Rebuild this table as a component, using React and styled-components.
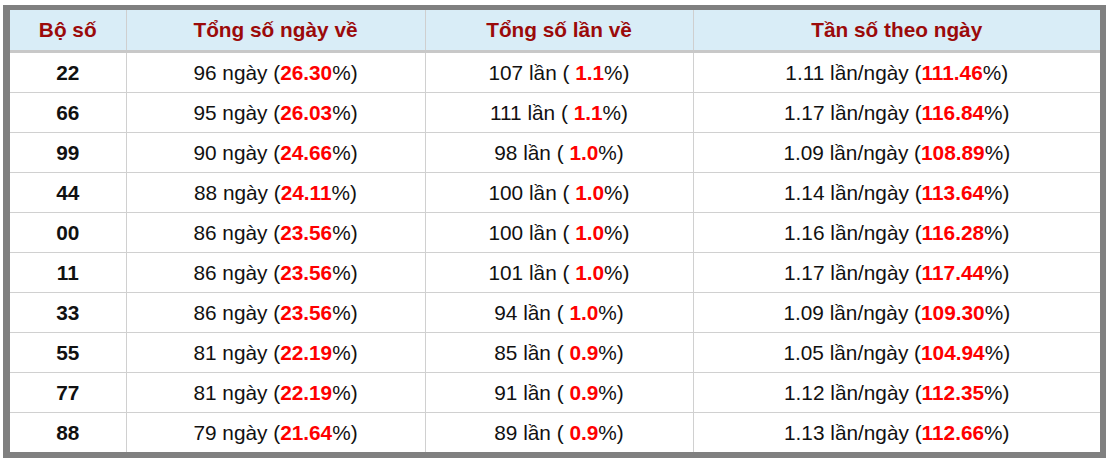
import React from "react";
import styled, { createGlobalStyle } from "styled-components";

const Global = createGlobalStyle`
  html, body { margin: 0; padding: 0; background: #ffffff; }
  body { font-family: "Liberation Sans", Arial, sans-serif; }
`;

const Frame = styled.div`
  margin: 5px 2px 0 3px;
  border-style: solid;
  border-color: #808080;
  border-width: 5px 6px 6px 7px;
  width: 1090px;
`;

const Table = styled.table`
  width: 1090px;
  border-collapse: collapse;
  table-layout: fixed;
  font-family: "Liberation Sans", Arial, sans-serif;
  font-size: 20.8px;
  color: #111;
`;

const Head = styled.th`
  height: 40px;
  padding: 0;
  background: #d9edf7;
  color: #9b0a0a;
  font-weight: bold;
  text-align: center;
  border-left: 1px solid #cfcfcf;
  border-bottom: 3px solid #c8c8c8;
  &:first-child { border-left: none; }
`;

const Cell = styled.td`
  height: 39px;
  padding: 0;
  text-align: center;
  white-space: nowrap;
  font-weight: ${(p) => (p.$bold ? "bold" : "normal")};
  border-left: 1px solid #d0d0d0;
  border-top: 1px solid #d0d0d0;
  &:first-child { border-left: none; }
`;

const Row = styled.tr`
  &:first-child td { border-top: none; }
`;

const Red = styled.b`
  color: #ff0000;
  font-weight: bold;
`;

const rows = [
  ["22", "96", "26.30", "107", "1.1", "1.11", "111.46"],
  ["66", "95", "26.03", "111", "1.1", "1.17", "116.84"],
  ["99", "90", "24.66", "98", "1.0", "1.09", "108.89"],
  ["44", "88", "24.11", "100", "1.0", "1.14", "113.64"],
  ["00", "86", "23.56", "100", "1.0", "1.16", "116.28"],
  ["11", "86", "23.56", "101", "1.0", "1.17", "117.44"],
  ["33", "86", "23.56", "94", "1.0", "1.09", "109.30"],
  ["55", "81", "22.19", "85", "0.9", "1.05", "104.94"],
  ["77", "81", "22.19", "91", "0.9", "1.12", "112.35"],
  ["88", "79", "21.64", "89", "0.9", "1.13", "112.66"],
];

export default function App() {
  return (
    <>
      <Global />
      <Frame>
        <Table>
          <colgroup>
            <col style={{ width: 116 }} />
            <col style={{ width: 299 }} />
            <col style={{ width: 268 }} />
            <col style={{ width: 407 }} />
          </colgroup>
          <thead>
            <tr>
              <Head>Bộ số</Head>
              <Head>Tổng số ngày về</Head>
              <Head>Tổng số lần về</Head>
              <Head>Tần số theo ngày</Head>
            </tr>
          </thead>
          <tbody>
            {rows.map((r) => (
              <Row key={r[0]}>
                <Cell $bold>{r[0]}</Cell>
                <Cell>
                  {r[1]} ngày (<Red>{r[2]}</Red>%)
                </Cell>
                <Cell>
                  {r[3]} lần ( <Red>{r[4]}</Red>%)
                </Cell>
                <Cell>
                  {r[5]} lần/ngày (<Red>{r[6]}</Red>%)
                </Cell>
              </Row>
            ))}
          </tbody>
        </Table>
      </Frame>
    </>
  );
}
